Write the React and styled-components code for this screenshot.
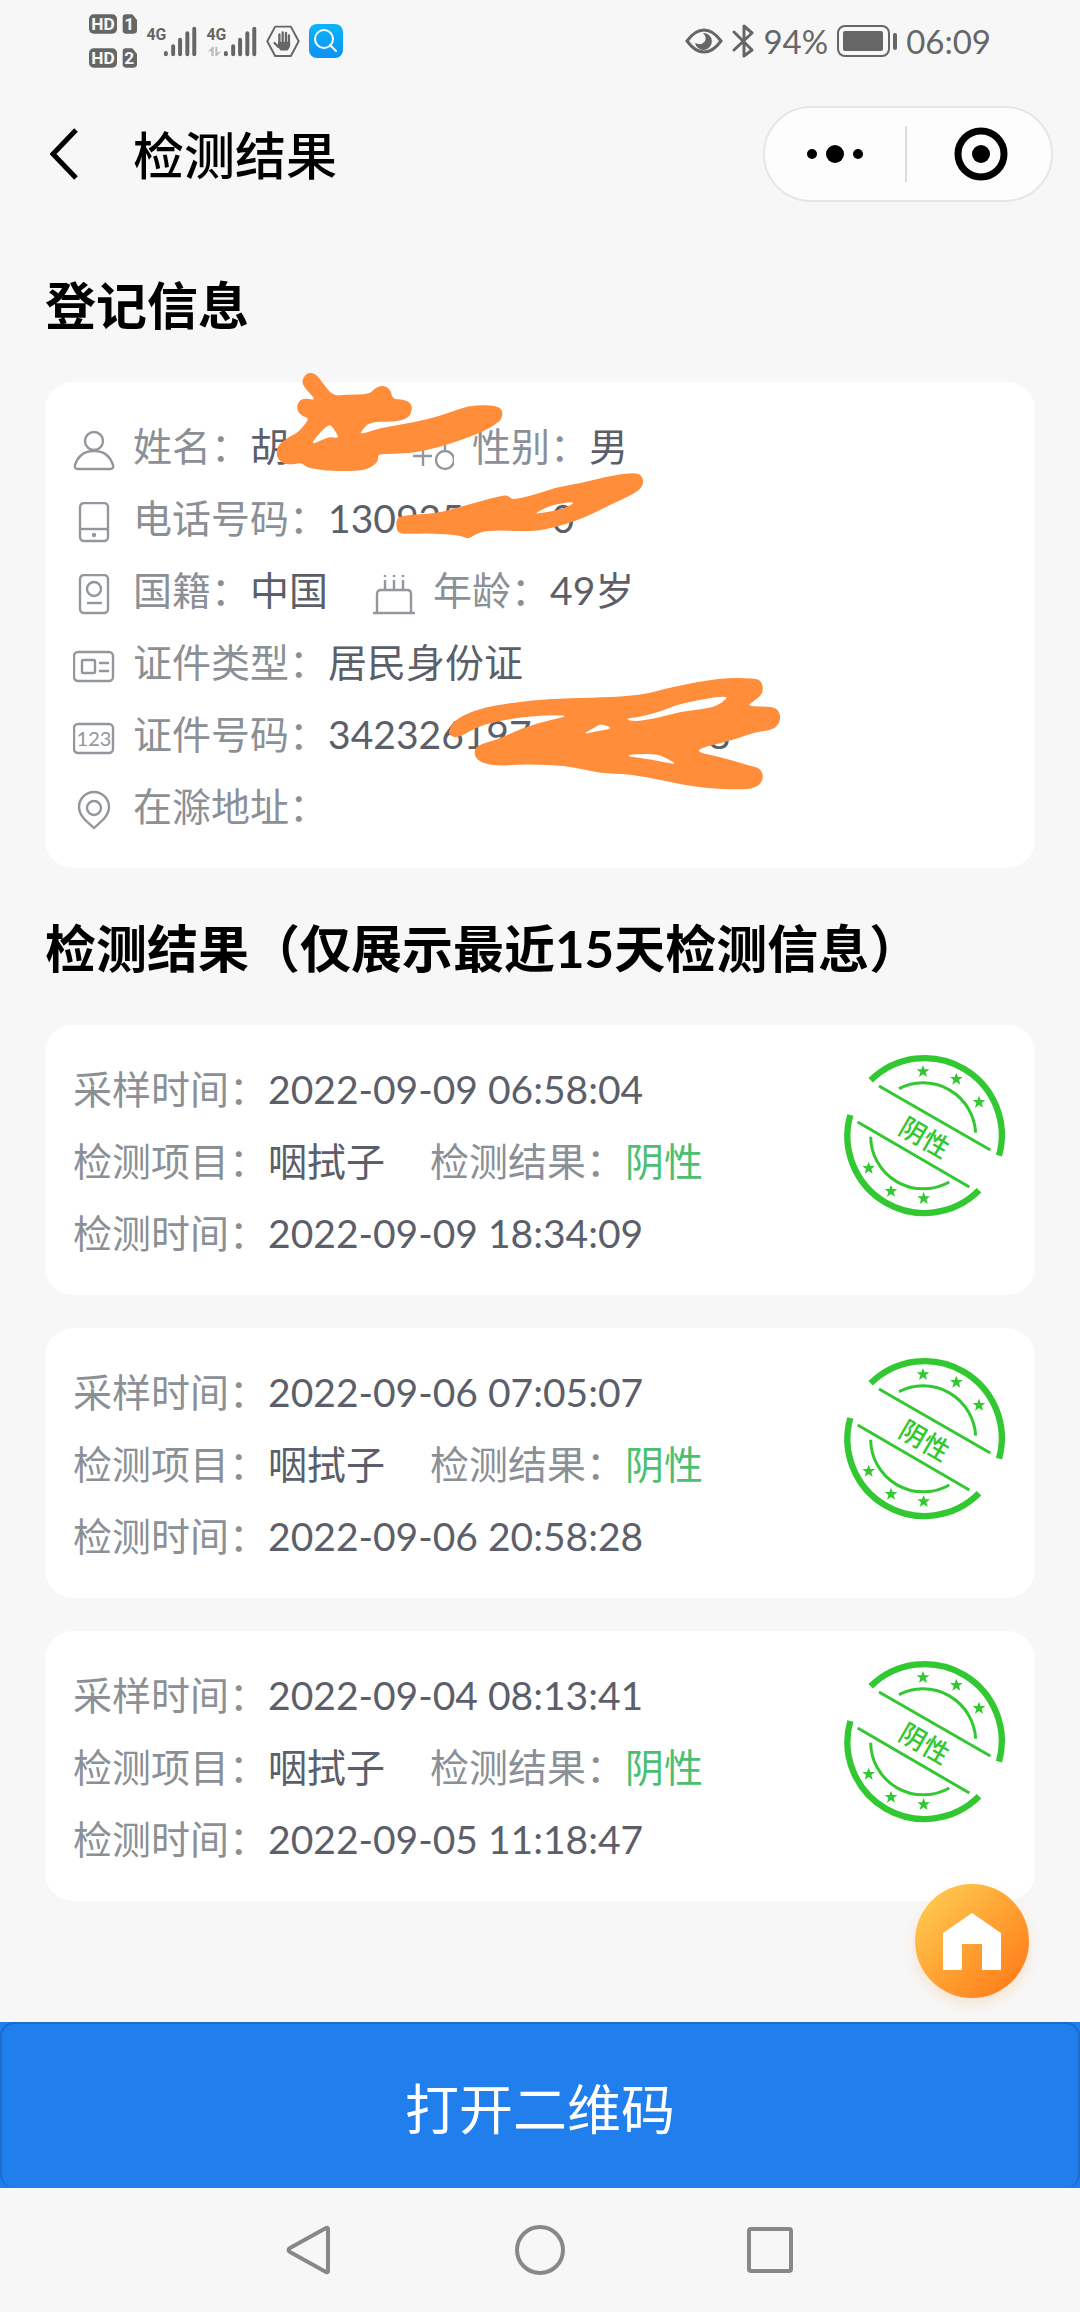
import styled, { createGlobalStyle } from "styled-components";

const records = [
  { id: 1, sampled: "2022-09-09 06:58:04", item: "咽拭子", result: "阴性", tested: "2022-09-09 18:34:09" },
  { id: 2, sampled: "2022-09-06 07:05:07", item: "咽拭子", result: "阴性", tested: "2022-09-06 20:58:28" },
  { id: 3, sampled: "2022-09-04 08:13:41", item: "咽拭子", result: "阴性", tested: "2022-09-05 11:18:47" },
];

// marker strokes over the private parts, first list is the outline, the rest are gaps in it
const marks = [
  {
    x: 40,
    y: 360,
    shapes: [
      "785,65 795,45 808,38 828,42 845,65 878,108 920,104 990,103 1003,85 1028,75 1052,88 1057,118 1090,118 1113,130 1117,150 1105,176 1060,185 990,186 970,205 958,225 1020,204 1120,188 1200,168 1270,143 1310,135 1360,136 1386,146 1388,170 1375,188 1320,220 1200,262 1120,278 1060,282 1012,282 1016,302 995,322 960,333 870,333 825,327 800,322 785,308 750,314 722,308 708,285 714,255 740,235 770,220 790,200 808,174 785,168 770,150 774,125 795,114 830,122 795,85",
      "868,190 880,205 900,236 870,230 840,242 814,254 830,228",
    ],
  },
  {
    x: 380,
    y: 360,
    shapes: [
      "48,500 50,475 70,466 170,460 250,438 370,405 386,408 398,420 460,405 530,382 600,370 680,350 740,340 778,340 792,360 782,392 700,430 620,470 560,492 490,510 440,514 330,510 285,522 265,538 240,525 150,520 85,522 55,520",
      "460,462 520,432 595,424 540,450 490,458",
    ],
  },
  {
    x: 400,
    y: 640,
    shapes: [
      "145,272 165,240 220,212 290,195 440,175 705,171 820,140 960,114 1065,114 1086,125 1090,158 1070,178 1036,200 1115,199 1138,212 1142,245 1120,270 1065,276 1000,300 870,332 960,350 1050,378 1080,384 1092,412 1075,442 1020,450 890,442 790,422 690,402 600,400 495,375 350,373 300,378 245,370 220,345 230,315 290,300 370,262 450,240 512,226 420,226 320,238 235,258 175,294 150,288",
      "545,284 585,262 605,250 640,266 595,272",
      "675,236 720,230 790,212 840,190 990,164 965,190 930,205 840,215 770,235 700,245",
      "662,346 765,340 800,355 836,376 750,358",
    ],
  },
];

function smooth(points) {
  const p = points.split(" ").map((s) => s.split(",").map(Number));
  const mid = (a, b) => `${(a[0] + b[0]) / 2} ${(a[1] + b[1]) / 2}`;
  let d = `M${mid(p[p.length - 1], p[0])}`;
  p.forEach((pt, i) => {
    d += `Q${pt[0]} ${pt[1]} ${mid(pt, p[(i + 1) % p.length])}`;
  });
  return d + "Z";
}

const icons = {
  person: (
    <>
      <circle cx="21" cy="11" r="9" />
      <path d="M5 39h32q4 0 3-4C37 26 30 21 21 21S5 26 2 35q-1 4 3 4z" />
    </>
  ),
  gender: (
    <>
      <path d="M11 2v34M1 26h19M33 2v18" />
      <circle cx="33" cy="30" r="9" />
    </>
  ),
  phone: (
    <>
      <rect x="7" y="1" width="28" height="38" rx="4" />
      <path d="M7 27h28" />
      <circle cx="21" cy="33" r="1" />
    </>
  ),
  passport: (
    <>
      <rect x="7" y="1" width="28" height="38" rx="4" />
      <circle cx="21" cy="15" r="7" />
      <path d="M14 29h15" />
    </>
  ),
  cake: (
    <>
      <path d="M0 39h42M4 39V20q0-4 4-4h26q4 0 4 4v19M12 16V6M21 16V6M30 16V6" />
      <path d="M12 1v2M21 1v2M30 1v2" />
    </>
  ),
  card: (
    <>
      <rect x="1" y="6" width="39" height="29" rx="4" />
      <rect x="9" y="14" width="13" height="13" rx="1" />
      <path d="M26 17h10M26 25h10" />
    </>
  ),
  number: (
    <>
      <rect x="1" y="6" width="39" height="29" rx="4" />
      <text x="21" y="28">
        123
      </text>
    </>
  ),
  pin: (
    <>
      <path d="M21 38C17 34 6 27 6 17a15 15 0 0 1 30 0c0 10-11 17-15 21z" />
      <circle cx="21" cy="18" r="7" />
    </>
  ),
};

function Field({ icon, label, children }) {
  return (
    <Item>
      {icon && (
        <FieldIcon viewBox="0 0 42 42" aria-hidden="true">
          {icons[icon]}
        </FieldIcon>
      )}
      <Label>{label}：</Label>
      {children}
    </Item>
  );
}

function Signal({ data }) {
  return (
    <svg width="51" height="33" viewBox="264 70 152 100" fill="#666">
      <text x="264" y="116" fontFamily="Roboto" fontWeight="700" fontSize="48">
        4G
      </text>
      {data && <path fill="#bbb" d="M268 152l14-16h4v28h-7v-16zM291 136h6v17l12-2-14 14h-4z" />}
      <g stroke="#666" strokeWidth="12" strokeLinecap="round">
        <path d="M323 159v-4M345 159v-25M366 159v-44M388 159v-64M409 159v-78" />
      </g>
    </svg>
  );
}

function StatusBar() {
  return (
    <Status>
      <StatusGroup>
        <svg width="48" height="54" viewBox="88 40 144 162" fontFamily="Roboto" fontWeight="700">
          {[0, 102].map((y, i) => (
            <g key={y} transform={`translate(0 ${y})`}>
              <rect x="88" y="41" width="84" height="58" rx="14" fill="#666" />
              <path d="M198 41h20l14 17v31q0 10-10 10h-24q-9 0-9-10V51q0-10 9-10z" fill="#666" />
              <text x="130" y="89" fontSize="52" textAnchor="middle" fill="#f7f7f7">
                HD
              </text>
              <text x="209" y="89" fontSize="52" textAnchor="middle" fill="#f7f7f7">
                {i + 1}
              </text>
            </g>
          ))}
        </svg>
        <Signal />
        <Signal data />
        <svg width="34" height="34" viewBox="626 70 104 104" fill="none" stroke="#666" strokeLinecap="round">
          <path d="M654 78h48l24 45-24 45h-48l-24-45z" strokeWidth="6" strokeLinejoin="round" />
          <path d="M667 132v-30M677 130V96M687 130V97M696 132v-27M652 128l12 12" strokeWidth="7" />
          <path d="M663 124h37v12q-2 10-8 15h-21q-5-4-8-12z" fill="#666" stroke="none" />
        </svg>
        <svg width="34" height="34" viewBox="0 0 34 34">
          <defs>
            <linearGradient id="search" x1="0" y1="0" x2="0" y2="1">
              <stop offset="0" stopColor="#0db5f7" />
              <stop offset="1" stopColor="#0c92f5" />
            </linearGradient>
          </defs>
          <rect width="34" height="34" rx="8" fill="url(#search)" />
          <g fill="none" stroke="#fff" strokeWidth="2" strokeLinecap="round">
            <circle cx="15" cy="15" r="9" />
            <path d="M21 21l6 6" />
          </g>
        </svg>
      </StatusGroup>
      <StatusGroup>
        <svg width="38" height="26" viewBox="0 0 38 26">
          <path d="M2 13Q10 2 19 2t17 11Q28 24 19 24T2 13z" fill="none" stroke="#666" strokeWidth="3" />
          <path d="M18 5a8.500 8.500 0 1 1-8 10q7 3 10-2 2-4-2-8z" fill="#666" />
        </svg>
        <svg width="22" height="34" viewBox="0 0 22 34" fill="none" stroke="#666" strokeWidth="3" strokeLinejoin="round" strokeLinecap="round">
          <path d="M2 8l18 18-8 6V2l8 7L2 26" />
        </svg>
        <span>94%</span>
        <svg width="60" height="32" viewBox="0 0 60 32" fill="#666">
          <rect x="1" y="1" width="51" height="30" rx="7" fill="none" stroke="#666" strokeWidth="2" />
          <rect x="6" y="6" width="40" height="20" rx="2" />
          <rect x="56" y="8" width="4" height="17" rx="2" />
        </svg>
        <span>06:09</span>
      </StatusGroup>
    </Status>
  );
}

const star = "0,-20 5,-7 19,-7 8,2 12,16 0,8 -12,16 -8,2 -19,-7 -5,-7";

function Stamp({ text }) {
  return (
    <StampSvg viewBox="66 99 492 492">
      <g fill="none" stroke="#32c832">
        <path strokeWidth="19" d="M149 181A231 231 0 0 1 534 407M88 285A231 231 0 0 0 474 511" />
        <path strokeWidth="9" d="M234 206A158 158 0 0 1 464 338M149 350A158 158 0 0 0 385 486" />
        <path strokeWidth="9" d="M174 198L508 390M110 306L445 501" />
      </g>
      <g fill="#32c832">
        {[[306, 155], [406, 178], [474, 247], [143, 445], [210, 514], [308, 536]].map(([x, y]) => (
          <polygon key={x} points={star} transform={`translate(${x} ${y})`} />
        ))}
        <text x="311" y="382" fontSize="79" fontWeight="500" textAnchor="middle" transform="rotate(30 311 352)">
          {text}
        </text>
      </g>
    </StampSvg>
  );
}

function App() {
  return (
    <Page>
      <GlobalStyle />
      <StatusBar />
      <Header>
        <IconButton aria-label="返回">
          <svg width="28" height="52" viewBox="0 0 28 52" fill="none" stroke="#000" strokeWidth="5">
            <path d="M26 2L3 26l23 24" />
          </svg>
        </IconButton>
        <Title>检测结果</Title>
        <Capsule>
          <CapsuleButton aria-label="更多">
            <svg width="58" height="20" viewBox="0 0 58 20">
              <circle cx="6" cy="10" r="5" />
              <circle cx="29" cy="10" r="9" />
              <circle cx="52" cy="10" r="5" />
            </svg>
          </CapsuleButton>
          <CapsuleButton aria-label="关闭">
            <svg width="54" height="54" viewBox="0 0 54 54">
              <circle cx="27" cy="27" r="23" fill="none" stroke="#000" strokeWidth="7" />
              <circle cx="27" cy="27" r="9" />
            </svg>
          </CapsuleButton>
        </Capsule>
      </Header>

      <Main>
        <Heading>登记信息</Heading>
        <Card>
          <Rows>
            <Row>
              <Field icon="person" label="姓名">
                <Value>
                  胡<Covered $chars={2} />
                </Value>
              </Field>
              <Field icon="gender" label="性别">
                <Value>男</Value>
              </Field>
            </Row>
            <Row>
              <Field icon="phone" label="电话号码">
                <Value>
                  130925
                  <Covered $digits={4} />0
                </Value>
              </Field>
            </Row>
            <Row>
              <Field icon="passport" label="国籍">
                <Value>中国</Value>
              </Field>
              <Field icon="cake" label="年龄">
                <Value>49岁</Value>
              </Field>
            </Row>
            <Row>
              <Field icon="card" label="证件类型">
                <Value>居民身份证</Value>
              </Field>
            </Row>
            <Row>
              <Field icon="number" label="证件号码">
                <Value>
                  342326197
                  <Covered $digits={8} />8
                </Value>
              </Field>
            </Row>
            <Row>
              <Field icon="pin" label="在滁地址" />
            </Row>
          </Rows>
          <Marks viewBox="45 382 989 486" aria-hidden="true">
            {marks.map((m) => (
              <path
                key={`${m.x}-${m.y}`}
                transform={`translate(${m.x} ${m.y}) scale(0.33333)`}
                fillRule="evenodd"
                d={m.shapes.map(smooth).join("")}
              />
            ))}
          </Marks>
        </Card>

        <Heading>检测结果（仅展示最近15天检测信息）</Heading>
        <List>
          {records.map((r) => (
            <Card key={r.id}>
              <Rows>
                <Row>
                  <Field label="采样时间">
                    <Value>{r.sampled}</Value>
                  </Field>
                </Row>
                <Row>
                  <Field label="检测项目">
                    <Value>{r.item}</Value>
                  </Field>
                  <Field label="检测结果">
                    <Value $negative>{r.result}</Value>
                  </Field>
                </Row>
                <Row>
                  <Field label="检测时间">
                    <Value>{r.tested}</Value>
                  </Field>
                </Row>
              </Rows>
              <Stamp text={r.result} />
            </Card>
          ))}
        </List>
      </Main>

      <Footer>
        <Home href="#home" aria-label="首页">
          <svg width="58" height="58" viewBox="0 0 58 58" fill="#fff">
            <path d="M29 1l29 20v37H39V32H19v26H0V21z" />
          </svg>
        </Home>
        <OpenBar>
          <OpenButton>打开二维码</OpenButton>
        </OpenBar>
        <NavBar>
          <IconButton aria-label="后退">
            <NavIcon viewBox="0 0 50 50">
              <path d="M43 4v42q0 2-2 1L5 27q-3-2 0-4L41 3q2-1 2 1z" />
            </NavIcon>
          </IconButton>
          <IconButton aria-label="主屏幕">
            <NavIcon viewBox="0 0 50 50">
              <circle cx="25" cy="25" r="23" />
            </NavIcon>
          </IconButton>
          <IconButton aria-label="最近任务">
            <NavIcon viewBox="0 0 50 50">
              <rect x="4" y="4" width="42" height="42" rx="2" />
            </NavIcon>
          </IconButton>
        </NavBar>
      </Footer>
    </Page>
  );
}

export default App;

const GlobalStyle = createGlobalStyle`
  * {
    box-sizing: border-box;
  }
  body {
    margin: 0;
    background: #f7f7f7;
    font-family: Lato, "Noto Sans CJK SC", sans-serif;
  }
  button {
    font-family: inherit;
    cursor: pointer;
  }
  svg {
    display: block;
    flex-shrink: 0;
  }
`;
const Page = styled.div`
  min-height: 100vh;
  display: flex;
  flex-direction: column;
  background: #f7f7f7;
`;
const Status = styled.div`
  height: 82px;
  padding: 0 89px;
  display: flex;
  align-items: center;
  justify-content: space-between;
  color: #666;
  font-size: 33px;
  line-height: 40px;
`;
const StatusGroup = styled.div`
  display: flex;
  align-items: center;
  gap: 9px;
`;
const Header = styled.header`
  height: 143px;
  padding: 0 27px 0 50px;
  display: flex;
  align-items: center;
`;
const IconButton = styled.button`
  padding: 0;
  border: none;
  background: none;
`;
const Title = styled.h1`
  margin: 0 auto 0 55px;
  padding-top: 4px;
  font-size: 51px;
  font-weight: 500;
  line-height: 72px;
`;
const Capsule = styled.div`
  width: 290px;
  height: 96px;
  display: flex;
  align-items: center;
  background: #fdfdfd;
  border: 2px solid #e6e6e6;
  border-radius: 48px;
`;
const CapsuleButton = styled.button`
  flex: 1;
  height: 56px;
  padding: 0;
  display: flex;
  align-items: center;
  justify-content: center;
  border: none;
  background: none;

  & + & {
    padding-left: 4px;
    border-left: 2px solid #dcdcdc;
  }
`;
const Main = styled.main`
  flex: 1;
  padding: 0 45px;
`;
const Heading = styled.h2`
  margin: 0;
  padding: 45px 0 40px;
  font-size: 51px;
  font-weight: 700;
  line-height: 72px;
`;
const List = styled.div`
  display: flex;
  flex-direction: column;
  gap: 33px;
`;
const Card = styled.section`
  position: relative;
  display: flex;
  justify-content: space-between;
  padding: 28px 28px 26px;
  background: #fff;
  border-radius: 28px;
`;
const Rows = styled.div`
  flex: 1;
`;
const Row = styled.dl`
  margin: 0;
  height: 72px;
  display: flex;
  gap: 45px;
  font-size: 39px;
  line-height: 72px;
  white-space: nowrap;
`;
const Item = styled.div`
  display: flex;
  align-items: center;
`;
const FieldIcon = styled.svg`
  width: 42px;
  height: 42px;
  margin: 10px 18px 0 0;
  fill: none;
  stroke: #92979d;
  stroke-width: 2.4;

  text {
    fill: #92979d;
    stroke: none;
    font-size: 20px;
    text-anchor: middle;
  }
`;
const Label = styled.dt`
  color: #8b9096;
`;
const Value = styled.dd`
  margin: 0;
  display: flex;
  white-space: pre;
  color: ${(props) => (props.$negative ? "#4bbf6f" : "#5c5f69")};
`;
const Covered = styled.span`
  width: ${(props) => (props.$chars ? props.$chars * 39 : props.$digits * 22)}px;
`;
const Marks = styled.svg`
  position: absolute;
  top: 0;
  left: 0;
  width: 989px;
  height: 486px;
  overflow: visible;
  fill: #ff8d3a;
  pointer-events: none;
`;
const StampSvg = styled.svg`
  width: 164px;
  height: 164px;
  overflow: visible;
`;
const Footer = styled.footer`
  position: relative;
`;
const Home = styled.a`
  position: absolute;
  right: 51px;
  bottom: calc(100% + 24px);
  width: 114px;
  height: 114px;
  display: flex;
  align-items: center;
  justify-content: center;
  border-radius: 50%;
  background: linear-gradient(135deg, #ffc94d 10%, #ff7d1a 90%);
  box-shadow: 0 6px 14px rgba(255, 150, 50, 0.2);
`;
const OpenBar = styled.div`
  background: #217fed;
`;
const OpenButton = styled.button`
  width: 100%;
  height: 166px;
  padding: 0;
  display: block;
  border: 2px solid #1c6ccb;
  border-bottom: none;
  border-radius: 14px;
  background: #217fed;
  color: #fff;
  font-size: 54px;
`;
const NavBar = styled.nav`
  height: 124px;
  display: flex;
  align-items: center;
  justify-content: center;
  gap: 180px;
`;
const NavIcon = styled.svg`
  width: 50px;
  height: 50px;
  fill: none;
  stroke: #888;
  stroke-width: 4;
`;
